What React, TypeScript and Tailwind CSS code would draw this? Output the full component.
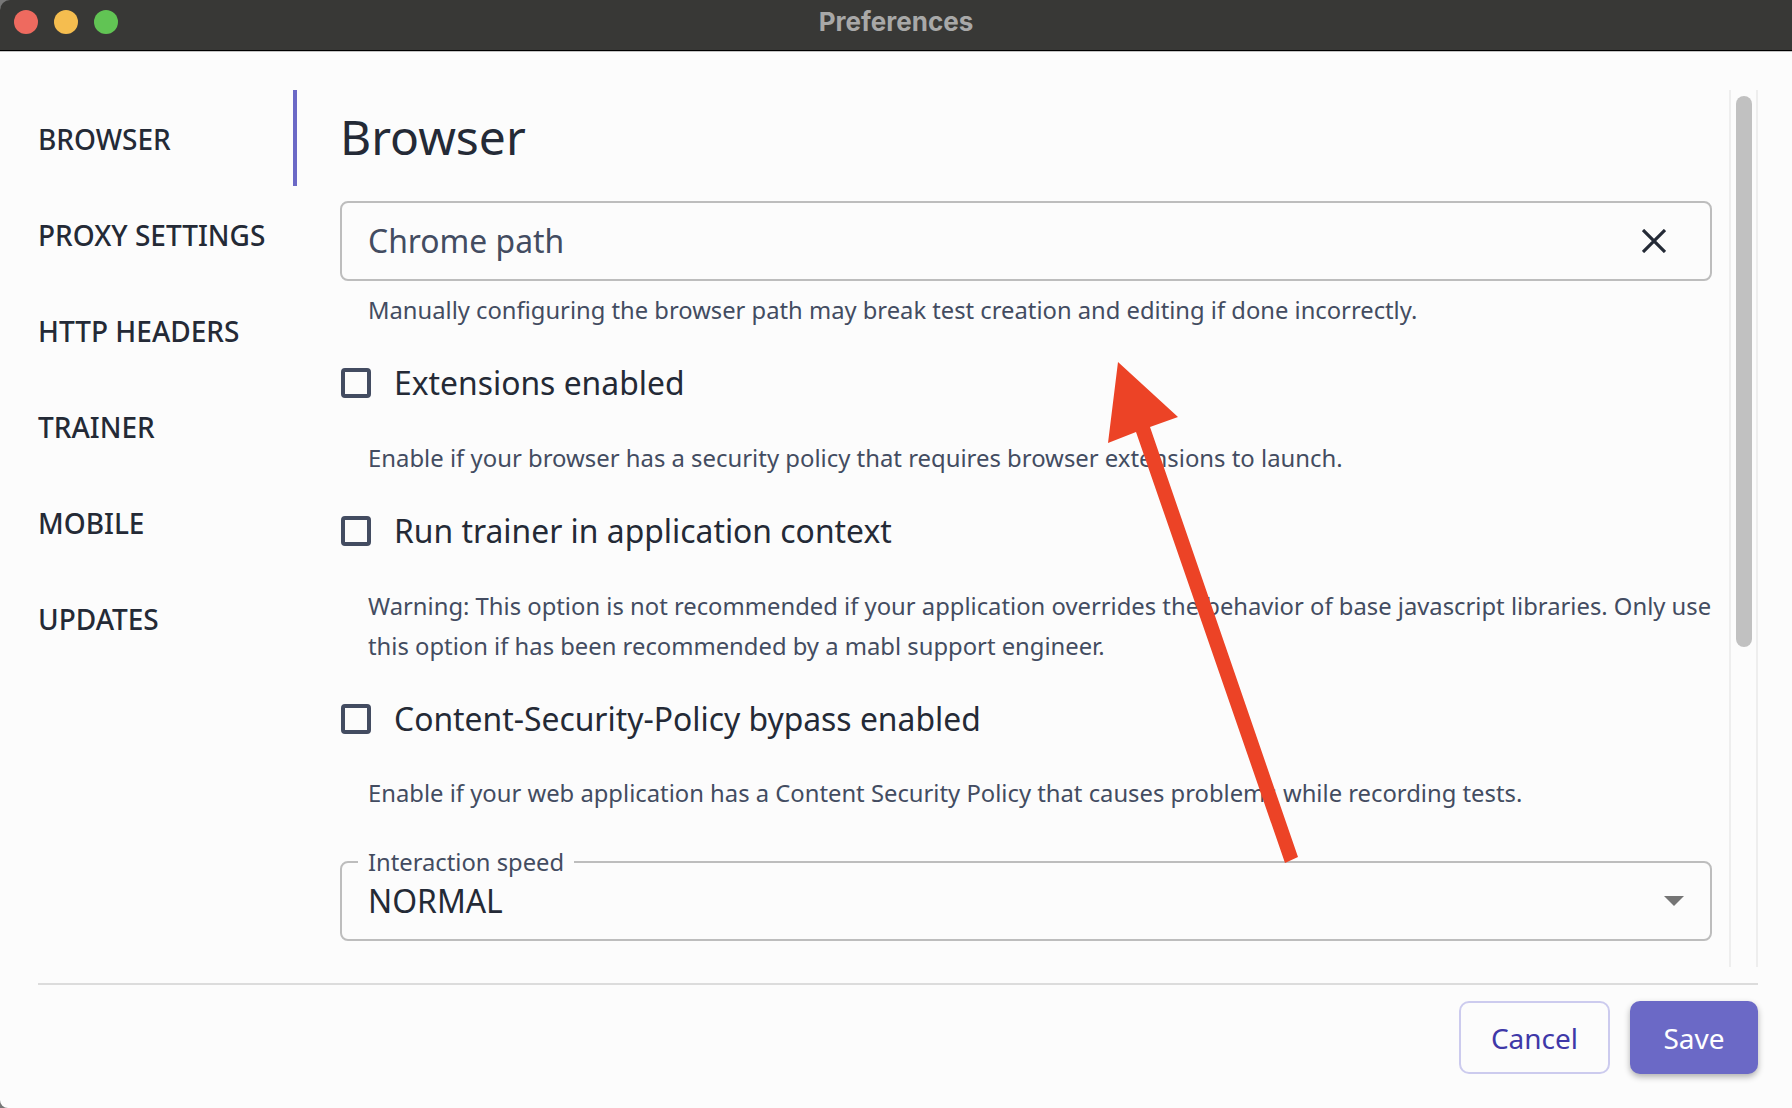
import React from "react";

const font = { fontFamily: '"Noto Sans", sans-serif' };

const navItems = ["BROWSER", "PROXY SETTINGS", "HTTP HEADERS", "TRAINER", "MOBILE", "UPDATES"];

function CheckRow({ label, descClass, children }: { label: string; descClass: string; children: React.ReactNode }) {
  return (
    <div>
      <div className="flex h-[40px] items-center">
        <span className="ml-[1px] h-[30px] w-[30px] rounded-[4px] border-[4px] border-[#434c61]" />
        <span className="ml-[23px] text-[31.85px] leading-[40px] text-[#242a36]">{label}</span>
      </div>
      <p className={`pl-[28px] leading-[40px] text-[#434c61] ${descClass}`}>{children}</p>
    </div>
  );
}

export default function App() {
  return (
    <div
      style={font}
      className="relative flex h-[1108px] w-[1792px] flex-col overflow-hidden bg-[#777777]"
    >
      <header className="relative flex h-[51px] shrink-0 items-center justify-center rounded-tl-[10px] border-b border-black bg-[#383836] pb-[6px] shadow-[0_1px_0_#c4c4c4]">
        <div className="absolute left-[14px] top-[10px] flex gap-[16px]">
          <span className="h-[24px] w-[24px] rounded-full bg-[#ee6a5f]" />
          <span className="h-[24px] w-[24px] rounded-full bg-[#f5bd4f]" />
          <span className="h-[24px] w-[24px] rounded-full bg-[#61c454]" />
        </div>
        <h1
          style={{ fontFamily: "Inter, sans-serif" }}
          className="text-[26px] font-bold leading-none text-[#a8a8a8]"
        >
          Preferences
        </h1>
      </header>

      <div className="flex min-h-0 flex-1 flex-col rounded-bl-[8px] bg-[#fcfcfc]">
        <div className="flex h-[916px] shrink-0 pl-[38px] pr-[34px] pt-[39px]">
          <nav className="flex w-[259px] shrink-0 flex-col">
            {navItems.map((item, i) => (
              <div
                key={item}
                className={`flex h-[96px] items-center pt-[2px] text-[28px] font-medium text-[#242a36] ${
                  i === 0 ? "border-r-[4px] border-[#6b69c6]" : ""
                }`}
              >
                {item}
              </div>
            ))}
          </nav>

          <main className="ml-[43px] w-[1372px] shrink-0">
            <h2 className="mt-[13px] h-[68px] text-[48px] leading-[68px] text-[#242a36]">Browser</h2>
            <div className="mt-[30px] flex h-[80px] items-center justify-between rounded-[8px] border-2 border-[#bdbdbd] pl-[26px] pr-[44px]">
              <span className="text-[31.85px] text-[#434c61]">Chrome path</span>
              <svg width="24" height="24" viewBox="0 0 24 24" fill="none" stroke="#242a36" strokeWidth="3.2">
                <path d="M1 1 L23 23 M23 1 L1 23" />
              </svg>
            </div>
            <p className="mt-[9px] pl-[28px] text-[23.75px] leading-[40px] text-[#434c61]">
              Manually configuring the browser path may break test creation and editing if done incorrectly.
            </p>
            <div className="mt-[33px] flex flex-col gap-[33px]">
              <CheckRow label="Extensions enabled" descClass="mt-[35px] text-[23.88px]">
                Enable if your browser has a security policy that requires browser extensions to launch.
              </CheckRow>
              <CheckRow label="Run trainer in application context" descClass="mt-[35px] text-[23.8px]">
                Warning: This option is not recommended if your application overrides the behavior of base javascript libraries. Only use this option if has been recommended by a mabl support engineer.
              </CheckRow>
              <CheckRow label="Content-Security-Policy bypass enabled" descClass="mt-[34px] text-[23.8px]">
                Enable if your web application has a Content Security Policy that causes problems while recording tests.
              </CheckRow>
            </div>
            <fieldset className="mt-[48px] flex h-[80px] items-center justify-between rounded-[8px] border-2 border-[#bdbdbd] pl-[26px] pr-[26px]">
              <legend className="-ml-[10px] px-[10px] text-[23.75px] leading-[2px] text-[#434c61]">Interaction speed</legend>
              <span className="text-[31.85px] leading-[40px] text-[#242a36]">NORMAL</span>
              <svg width="20" height="10" viewBox="0 0 20 10" fill="#757575">
                <path d="M0 0 H20 L10 10 Z" />
              </svg>
            </fieldset>
          </main>

          <div className="ml-[17px] h-[877px] w-[29px] shrink-0 border-x-2 border-[#eeeeee] px-[5px] pt-[6px]">
            <div className="h-[551px] w-[16px] rounded-full bg-[#c1c1c1]" />
          </div>
        </div>

        <footer className="ml-[38px] mr-[34px] mt-[16px] flex h-[90px] justify-end gap-[20px] border-t-2 border-[#dcdcdc] pt-[16px]">
          <button className="h-[73px] w-[151px] rounded-[10px] border-2 border-[#cccbee] text-[28px] text-[#3f38a8]">
            Cancel
          </button>
          <button className="h-[73px] w-[128px] rounded-[10px] bg-[#6b69c6] text-[28px] text-white shadow-[0_3px_6px_rgba(0,0,0,0.3)]">
            Save
          </button>
        </footer>
      </div>

      <svg className="pointer-events-none absolute left-0 top-0" width="1792" height="1108" viewBox="0 0 1792 1108">
        <polygon fill="#ec4326" points="1118,362 1178,417 1150,427 1298,857 1285,863 1136,432 1108,443" />
      </svg>
    </div>
  );
}
